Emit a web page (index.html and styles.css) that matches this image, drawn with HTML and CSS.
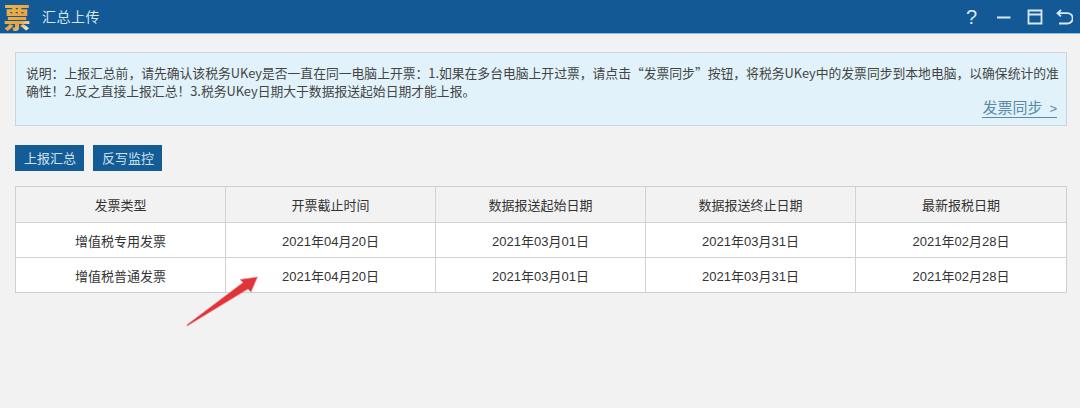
FILE: index.html
```html
<!DOCTYPE html>
<html lang="zh-CN">
<head>
<meta charset="utf-8">
<title>汇总上传</title>
<link rel="stylesheet" href="styles.css">
</head>
<body>
<header class="titlebar">
  <div class="brand">
    <span class="logo">票</span>
    <span class="title">汇总上传</span>
  </div>
  <div class="controls">
    <span class="help">?</span>
    <svg class="ctl ctl-min" width="16" height="16" viewBox="0 0 16 16"><path d="M1 8.5h13.5" stroke="#dbe9f4" stroke-width="2" fill="none"/></svg>
    <svg class="ctl ctl-max" width="16" height="16" viewBox="0 0 16 16"><path d="M1.5 1.5h13v13h-13zM1.5 5.5h13" stroke="#dbe9f4" stroke-width="1.8" fill="none"/></svg>
    <svg class="ctl ctl-back" width="17" height="16" viewBox="0 0 17 16"><path d="M5 1L1.5 4.2 5 7.4M2 4.2h9.5a3.9 3.9 0 0 1 0 10.3H3" stroke="#dbe9f4" stroke-width="1.8" fill="none"/></svg>
  </div>
</header>
<main class="content">
  <section class="notice">
    <p class="notice-text">说明：上报汇总前，请先确认该税务UKey是否一直在同一电脑上开票：1.如果在多台电脑上开过票，请点击“发票同步”按钮，将税务UKey中的发票同步到本地电脑，以确保统计的准确性！2.反之直接上报汇总！3.税务UKey日期大于数据报送起始日期才能上报。</p>
    <a class="sync-link">发票同步<span class="chevron">&gt;</span></a>
  </section>
  <div class="actions">
    <button class="btn">上报汇总</button>
    <button class="btn">反写监控</button>
  </div>
  <div class="table">
    <div class="row head">
      <div class="cell">发票类型</div><div class="cell">开票截止时间</div><div class="cell">数据报送起始日期</div><div class="cell">数据报送终止日期</div><div class="cell">最新报税日期</div>
    </div>
    <div class="row">
      <div class="cell">增值税专用发票</div><div class="cell">2021年04月20日</div><div class="cell">2021年03月01日</div><div class="cell">2021年03月31日</div><div class="cell">2021年02月28日</div>
    </div>
    <div class="row">
      <div class="cell">增值税普通发票</div><div class="cell">2021年04月20日</div><div class="cell">2021年03月01日</div><div class="cell">2021年03月31日</div><div class="cell">2021年02月28日</div>
    </div>
  </div>
</main>
<svg class="arrow" width="80" height="60" viewBox="0 0 80 60"><path d="M0.7 55L57 12.5 54 9.5 71.5 7 65 22 62 19 1.5 55.8Z" fill="#e0343a" stroke="#ef8f8f" stroke-width="0.7"/></svg>
</body>
</html>
```
FILE: styles.css
```css
* { box-sizing: border-box; }
html, body { margin: 0; padding: 0; }
body {
  position: relative;
  width: 1080px;
  height: 408px;
  overflow: hidden;
  background: #f2f2f2;
  font-family: "Liberation Sans", "Noto Sans CJK SC", sans-serif;
  color: #333;
}
.titlebar {
  height: 34px;
  background: #125995;
  border-bottom: 1px solid #8cc0de;
  display: flex;
  align-items: center;
  justify-content: space-between;
}
.brand { display: flex; align-items: center; }
.logo {
  width: 28px;
  margin-left: 3px;
  font: 900 27px/33px "Noto Sans CJK SC", sans-serif;
  text-align: center;
  color: #e9ab48;
  background: linear-gradient(135deg, #f2b94f 0%, #e8a33e 65%, #f4e3c0 85%, #ffffff 100%);
  -webkit-background-clip: text;
  background-clip: text;
  -webkit-text-fill-color: transparent;
}
.title {
  margin-left: 11px;
  margin-top: -2px;
  font-size: 14px;
  color: #d4e6f2;
  letter-spacing: 0.5px;
}
.controls { display: flex; align-items: center; padding-right: 7px; }
.help {
  font-size: 20px;
  font-weight: 400;
  line-height: 20px;
  color: #dbe9f4;
  width: 12px;
  margin-right: 18px;
}
.ctl { display: block; }
.ctl-min { margin-right: 15px; }
.ctl-max { margin-right: 13px; }
.content { padding: 18px 13px 0 15px; }
.notice {
  height: 74px;
  background: #e1f2fa;
  border: 1px solid #c6d6e0;
  padding: 11px 10px 0 10px;
  display: flex;
  flex-direction: column;
}
.notice-text {
  margin: 0 -4px 0 0;
  font-family: "Noto Sans CJK SC", sans-serif;
  font-size: 12.8px;
  line-height: 18px;
  color: #444;
}
.sync-link {
  align-self: flex-end;
  margin-top: -1px;
  margin-right: -1px;
  font-size: 15px;
  line-height: 17px;
  color: #5a8aa6;
  border-bottom: 1px solid #5a8aa6;
}
.chevron { margin-left: 7px; font-size: 13px; }
.actions { display: flex; gap: 9px; margin-top: 19px; }
.btn {
  width: 69px;
  height: 26px;
  padding: 0 0 0 1px;
  border: 0;
  background: #145c96;
  color: #cfe2f0;
  font: 13px/27px "Liberation Sans", "Noto Sans CJK SC", sans-serif;
}
.table {
  margin-top: 15px;
  border: 1px solid #cfcfcf;
  background: #fff;
}
.row {
  display: grid;
  grid-template-columns: repeat(5, 1fr);
  height: 35px;
  border-top: 1px solid #d2d2d2;
}
.row.head { height: 35px; border-top: 0; background: #f2f2f2; }
.cell {
  display: flex;
  align-items: center;
  justify-content: center;
  font-size: 13px;
  color: #333;
  border-right: 1px solid #d2d2d2;
}
.cell:last-child { border-right: 0; }
.arrow { position: absolute; left: 186px; top: 270px; }
```
